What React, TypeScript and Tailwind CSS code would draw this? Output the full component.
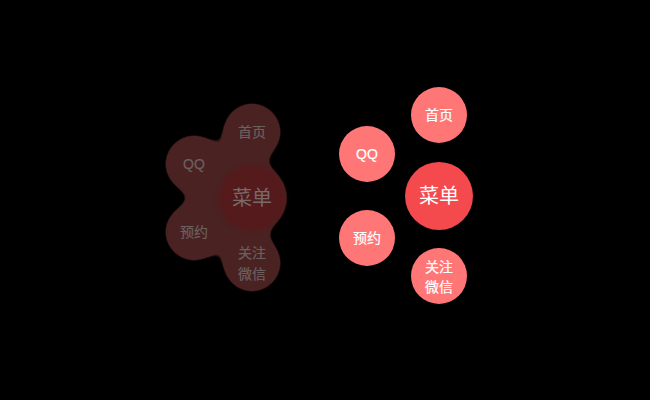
import React from "react";

const font = { fontFamily: '"Liberation Sans", "Noto Sans CJK SC", sans-serif' };

function Node({ x, y, size, className, children }: { x: number; y: number; size: number; className?: string; children?: React.ReactNode }) {
  return (
    <div
      className={`absolute flex items-center justify-center rounded-full text-center ${className ?? ""}`}
      style={{ left: x - size / 2, top: y - size / 2, width: size, height: size }}
    >
      {children}
    </div>
  );
}

// Radial menu nodes: centre coordinates inside each menu's own canvas.
const items = [
  { lx: 97, ly: 52, rx: 109, ry: 35, t: "首页" },
  { lx: 39, ly: 84, rx: 37, ry: 74, t: "QQ" },
  { lx: 39, ly: 152, rx: 37, ry: 158, t: "预约" },
  { lx: 97, ly: 183, rx: 109, ry: 196, t: "关注\n微信", two: true },
];

export default function App() {
  return (
    <div className="flex h-[400px] w-[650px] items-center justify-center gap-[30px] overflow-hidden bg-black" style={font}>
      <svg className="absolute h-0 w-0">
        <defs>
          <filter id="goo" x="-20%" y="-20%" width="140%" height="140%" colorInterpolationFilters="sRGB">
            <feGaussianBlur in="SourceGraphic" stdDeviation="10" />
            <feColorMatrix values="1 0 0 0 0 0 1 0 0 0 0 0 1 0 0 0 0 0 18 -7" />
          </filter>
        </defs>
      </svg>

      <div className="relative h-[240px] w-[145px] shrink-0">
        <div className="absolute inset-0 opacity-[0.29]">
          <div className="absolute inset-0 [filter:url(#goo)]">
            {items.map((i) => (
              <Node key={i.t} x={i.lx} y={i.ly} size={56} className="bg-[#ff7676]" />
            ))}
            <Node x={97} y={118} size={68} className="bg-[#ff7676]" />
            <Node x={67} y={118} size={50} className="bg-[#ff7676]" />
          </div>
        </div>
        <Node x={97} y={118} size={66} className="bg-[#551a1b] blur-[2px]" />
        {items.map((i) => (
          <Node key={i.t} x={i.lx} y={i.ly} size={56} className="whitespace-pre-line text-sm leading-[21px] text-[#6c6060] [-webkit-text-stroke:0.2px_#6c6060]">
            <span className={i.two ? "translate-y-[1px]" : ""}>{i.t}</span>
          </Node>
        ))}
        <Node x={97} y={118} size={68} className="text-xl text-[#786a6a]">菜单</Node>
      </div>

      <div className="relative h-[240px] w-[165px] shrink-0">
        {items.map((i) => (
          <Node key={i.t} x={i.rx} y={i.ry} size={56} className="whitespace-pre-line bg-[#ff7676] text-sm leading-[20px] text-white [-webkit-text-stroke:0.2px_white]">
            <span className={i.two ? "translate-y-[1px]" : ""}>{i.t}</span>
          </Node>
        ))}
        <Node x={109} y={116} size={68} className="bg-[#f44a4e] text-xl text-white">菜单</Node>
      </div>
    </div>
  );
}
